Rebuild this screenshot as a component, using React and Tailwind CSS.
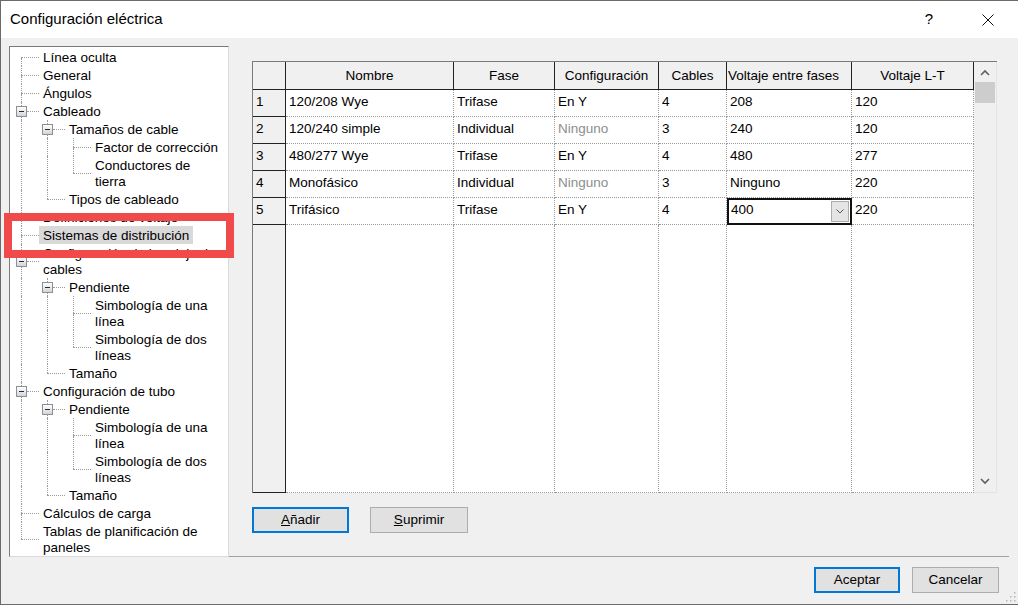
import React from "react";

const dot = "border-dotted border-[#9a9a9a]";

const tree = [
  { t: ["Línea oculta"] },
  { t: ["General"] },
  { t: ["Ángulos"] },
  {
    t: ["Cableado"],
    c: [
      {
        t: ["Tamaños de cable"],
        c: [{ t: ["Factor de corrección"] }, { t: ["Conductores de", "tierra"] }],
      },
      { t: ["Tipos de cableado"] },
    ],
  },
  { t: ["Definiciones de voltaje"] },
  { t: ["Sistemas de distribución"], sel: true },
  {
    t: ["Configuración de bandeja de", "cables"],
    c: [
      {
        t: ["Pendiente"],
        c: [{ t: ["Simbología de una", "línea"] }, { t: ["Simbología de dos", "líneas"] }],
      },
      { t: ["Tamaño"] },
    ],
  },
  {
    t: ["Configuración de tubo"],
    c: [
      {
        t: ["Pendiente"],
        c: [{ t: ["Simbología de una", "línea"] }, { t: ["Simbología de dos", "líneas"] }],
      },
      { t: ["Tamaño"] },
    ],
  },
  { t: ["Cálculos de carga"] },
  { t: ["Tablas de planificación de", "paneles"] },
];

// flatten the tree so each row knows which ancestor lines keep going
const flatten = (nodes, anc, out, root) => {
  nodes.forEach((n, i) => {
    const hasNext = i < nodes.length - 1;
    out.push({ ...n, anc, hasNext, first: root && i === 0, open: !!n.c });
    if (n.c) flatten(n.c, [...anc, hasNext], out, false);
  });
  return out;
};

const rows = flatten(tree, [], [], true);

const MinusBox = () => (
  <div className="ml-[6px] w-[11px] h-[11px] shrink-0 border border-[#8f8f8f] bg-gradient-to-b from-white to-[#d0d5dd] flex items-center justify-center">
    <div className="w-[5px] h-px bg-[#2a2a2a]" />
  </div>
);

const TreeRow = ({ row }) => (
  <div className="flex">
    {row.anc.map((cont, i) => (
      <div key={i} className="w-[26px] shrink-0 flex">
        {cont && <div className={`ml-[11px] border-l ${dot}`} />}
      </div>
    ))}
    <div className="w-[29px] shrink-0 flex flex-col">
      <div className={`flex-1 ml-[11px] ${row.first ? "" : `border-l ${dot}`}`} />
      {row.open ? (
        <div className="flex items-center h-[11px]">
          <MinusBox />
          <div className={`flex-1 border-t ${dot}`} />
        </div>
      ) : (
        <div className={`ml-[11px] border-t ${dot}`} />
      )}
      <div className={`flex-1 ml-[11px] ${row.hasNext ? `border-l ${dot}` : ""}`} />
    </div>
    <div className={`px-1 pt-[2px] leading-4 whitespace-nowrap ${row.sel ? "bg-[#d9d9d9]" : ""}`}>
      {row.t.map((l, i) => (
        <div key={i}>{l}</div>
      ))}
    </div>
  </div>
);

const cols = [
  { w: "w-[168px]", h: "Nombre", c: true },
  { w: "w-[101px]", h: "Fase", c: true },
  { w: "w-[104px]", h: "Configuración", c: true },
  { w: "w-[68px]", h: "Cables", c: true },
  { w: "w-[125px]", h: "Voltaje entre fases", c: false },
  { w: "w-[122px]", h: "Voltaje L-T", c: true },
];

const data = [
  ["120/208 Wye", "Trifase", "En Y", "4", "208", "120"],
  ["120/240 simple", "Individual", "Ninguno", "3", "240", "120"],
  ["480/277 Wye", "Trifase", "En Y", "4", "480", "277"],
  ["Monofásico", "Individual", "Ninguno", "3", "Ninguno", "220"],
  ["Trifásico", "Trifase", "En Y", "4", "400", "220"],
];

const Chevron = ({ up }) => (
  <svg width="10" height="7" viewBox="0 0 10 7">
    <polyline
      points={up ? "1,6 5,2 9,6" : "1,1 5,5 9,1"}
      fill="none"
      stroke="#606060"
      strokeWidth="1.6"
    />
  </svg>
);

const Grid = () => (
  <div className="flex h-[432px] w-[745px] border-l border-t border-[#7a7a7a]">
    <div className="flex flex-col">
      <div className="flex h-[28px] bg-[#f0f0f0] border-b border-[#222]">
        <div className="w-[33px] border-r border-[#222]" />
        {cols.map((c) => (
          <div
            key={c.h}
            className={`${c.w} border-r border-[#222] pt-[2px] flex items-center whitespace-nowrap overflow-hidden ${c.c ? "justify-center" : "pl-[1px]"}`}
          >
            {c.h}
          </div>
        ))}
      </div>
      {data.map((r, ri) => (
        <div key={ri} className="flex h-[27px]">
          <div className="w-[33px] bg-[#f0f0f0] border-r border-b border-[#222] pl-[3px] pb-[2px] flex items-center">
            {ri + 1}
          </div>
          {r.map((v, ci) =>
            ri === 4 && ci === 4 ? (
              <div
                key={ci}
                className={`${cols[ci].w} bg-white border-2 border-[#111] pl-[2px] flex items-center`}
              >
                <span className="pb-[2px]">{v}</span>
                <div className="ml-auto mr-[1px] w-[18px] h-[21px] bg-[#e5e5e5] border border-[#adadad] flex items-center justify-center">
                  <svg width="8" height="5" viewBox="0 0 8 5">
                    <polyline points="0.5,0.5 4,4 7.5,0.5" fill="none" stroke="#555" strokeWidth="1" />
                  </svg>
                </div>
              </div>
            ) : (
              <div
                key={ci}
                className={`${cols[ci].w} bg-white border-r border-b ${dot} pl-[3px] pb-[2px] flex items-center whitespace-nowrap ${ci === 2 && v === "Ninguno" ? "text-[#8d8d8d]" : ""}`}
              >
                {v}
              </div>
            )
          )}
        </div>
      ))}
      <div className="flex flex-1">
        <div className="w-[33px] bg-[#f0f0f0] border-r border-b border-[#222]" />
        {cols.map((c) => (
          <div key={c.h} className={`${c.w} bg-white border-r border-b ${dot}`} />
        ))}
      </div>
    </div>
    <div className="w-[23px] flex flex-col bg-[#f0f0f0] border-r border-b border-[#e4e4e4]">
      <div className="h-[20px] flex items-center justify-center">
        <Chevron up />
      </div>
      <div className="h-[21px] mx-[1px] bg-[#cdcdcd]" />
      <div className="flex-1" />
      <div className="h-[17px] flex items-start justify-center pt-[3px]">
        <Chevron />
      </div>
    </div>
  </div>
);

const Btn = ({ focus, w, children }) => (
  <div
    className={`${w} h-[26px] flex items-center justify-center bg-[#e1e1e1] ${focus ? "border-2 border-[#0078d7]" : "border border-[#adadad]"}`}
  >
    {children}
  </div>
);

export default function App() {
  return (
    <div className="relative w-[1018px] h-[605px] overflow-hidden border-l border-t border-b border-[#6a6a6a] bg-[#f0f0f0] text-[13.5px] text-black font-['Liberation_Sans',Arial,sans-serif]">
      <div className="h-[37px] bg-white flex items-center pl-[9px]">
        <span className="text-[15px]">Configuración eléctrica</span>
        <span className="ml-auto text-[15px]">?</span>
        <svg className="ml-[49px] mr-[24px]" width="12" height="12" viewBox="0 0 12 12">
          <path d="M0.5 0.5 L11.5 11.5 M11.5 0.5 L0.5 11.5" stroke="#111" strokeWidth="1" />
        </svg>
      </div>

      <div className="flex h-[519px]">
        <div className="mt-[8px] ml-[8px] w-[220px] h-[511px] bg-white border border-t-[#7a7a7a] border-l-[#7a7a7a] border-r-[#dadada] border-b-[#dadada] pt-[1px] overflow-hidden">
          {rows.map((r, i) => (
            <TreeRow key={i} row={r} />
          ))}
        </div>
        <div className="w-[780px] flex flex-col">
          <div className="pl-[23px] pt-[23px]">
            <Grid />
            <div className="flex gap-[21px] mt-[14px]">
              <Btn focus w="w-[97px]">
                <span className="underline">A</span>ñadir
              </Btn>
              <Btn w="w-[98px]">
                <span className="underline">S</span>uprimir
              </Btn>
            </div>
          </div>
          <div className="mt-auto h-px bg-[#a0a0a0]" />
        </div>
      </div>

      <div className="flex justify-end gap-[12px] pt-[10px] pr-[19px]">
        <Btn focus w="w-[86px]">Aceptar</Btn>
        <Btn w="w-[87px]">Cancelar</Btn>
      </div>

      {/* resize grip */}
      <svg className="absolute right-[2px] bottom-[2px]" width="11" height="11" viewBox="0 0 11 11">
        {[
          [9, 1],
          [9, 5],
          [5, 5],
          [9, 9],
          [5, 9],
          [1, 9],
        ].map(([x, y], i) => (
          <rect key={i} x={x} y={y} width="1.5" height="1.5" fill="#b5b5b5" />
        ))}
      </svg>

      {/* red annotation frame */}
      <div className="absolute left-[3px] top-[212px] w-[230px] h-[45px] border-[8px] border-[#f04a4a]" />
    </div>
  );
}
